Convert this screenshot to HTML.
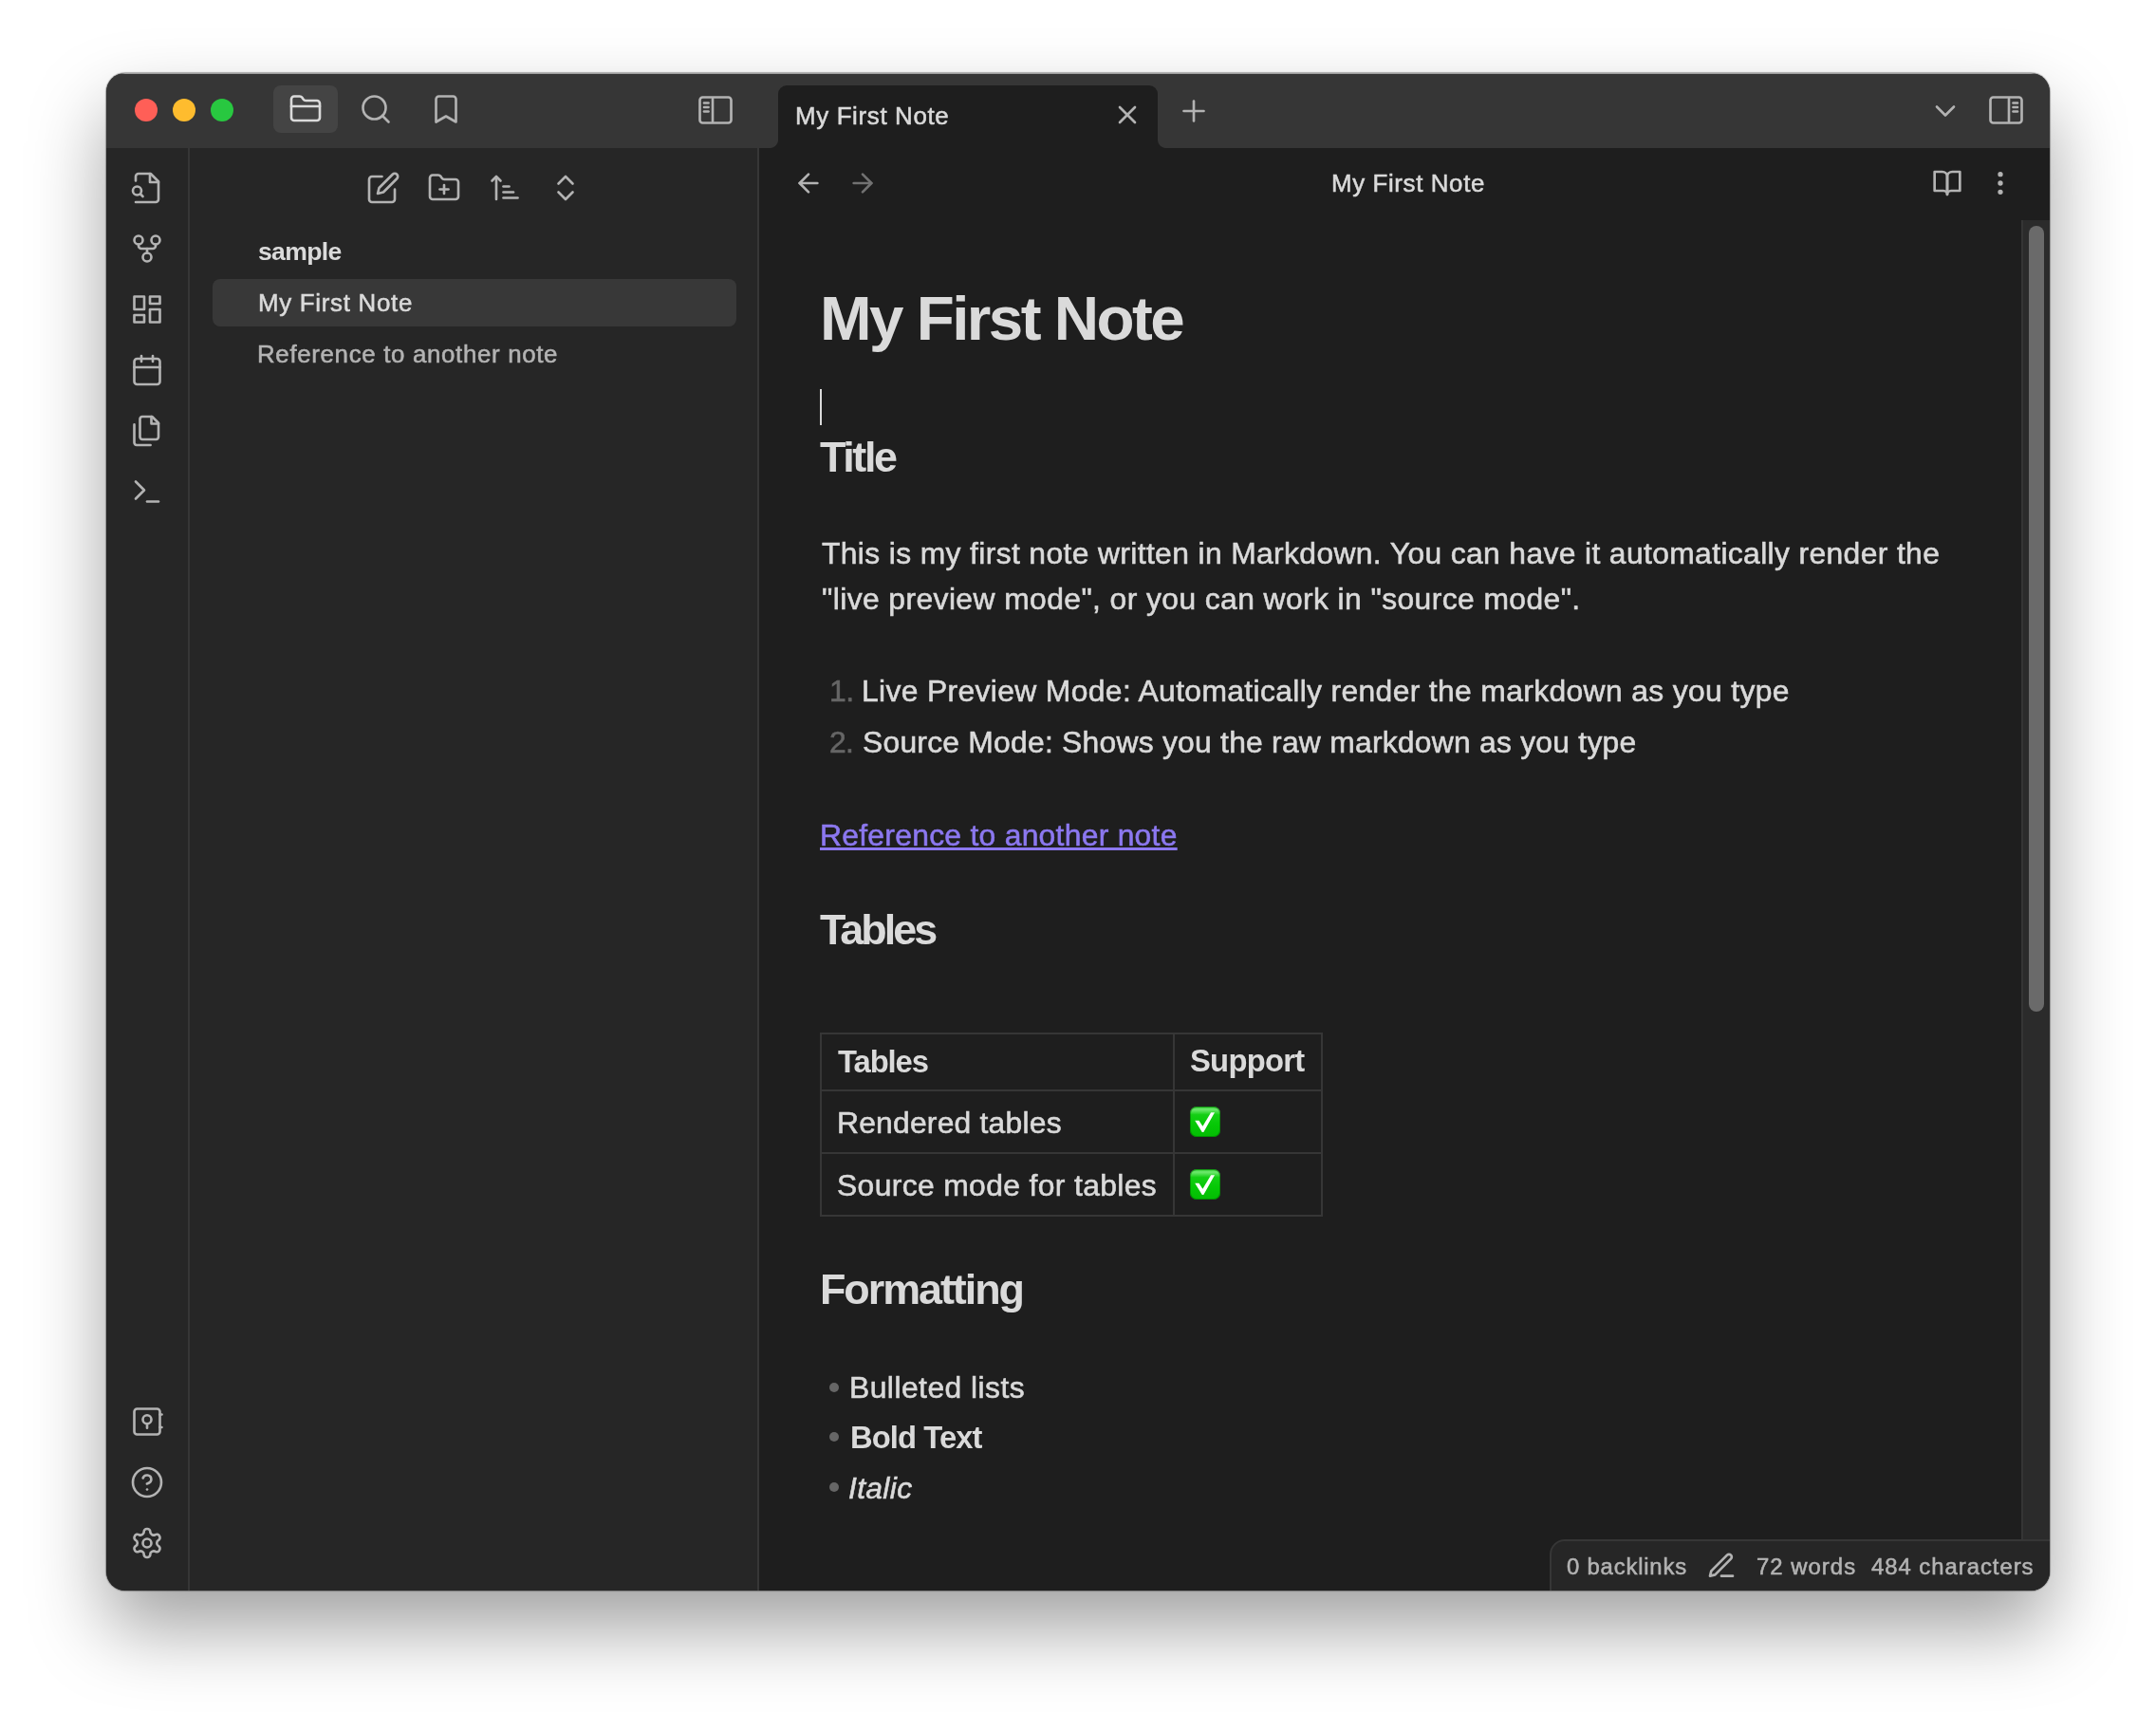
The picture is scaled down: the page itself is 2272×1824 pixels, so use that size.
<!DOCTYPE html>
<html lang="en">
<head>
<meta charset="utf-8">
<title>My First Note - sample - Obsidian</title>
<style>
*{box-sizing:border-box;margin:0;padding:0}
html,body{width:2272px;height:1824px;overflow:hidden;background:#fff}
body{position:relative;font-family:"Liberation Sans",Arial,Helvetica,sans-serif;-webkit-font-smoothing:antialiased}
.abs,.t,.ic,#app>div,#shadow{position:absolute}
#txt{position:absolute;left:0;top:0;width:2272px;height:1824px;will-change:transform}
nav,header,main,footer{display:contents}
.t{white-space:nowrap;font-weight:400;margin:0}
.ic{fill:none;stroke:currentColor;stroke-linecap:round;stroke-linejoin:round;overflow:visible}
#shadow{left:112px;top:77px;width:2048px;height:1599px;border-radius:20px;
  box-shadow:0 0 1px 1px rgba(0,0,0,.3),0 40px 80px 0 rgba(0,0,0,.37)}
#app{position:absolute;left:0;top:0;width:2272px;height:1824px;clip-path:inset(77px 112px 148px 112px round 20px);background:#1e1e1e}
#titlebar{left:112px;top:77px;width:2048px;height:79px;background:#363636;box-shadow:inset 0 1px 0 #a0a0a0}
#ribbon{left:112px;top:156px;width:88px;height:1520px;background:#262626;border-right:2px solid #363636}
#sidebar{left:200px;top:156px;width:600px;height:1520px;background:#262626;border-right:2px solid #363636}
#tabsel{left:288px;top:90px;width:68px;height:50px;border-radius:8px;background:#444444}
#tab{left:820px;top:90px;width:400px;height:66px;border-radius:9px 9px 0 0;background:#1e1e1e}
#tabl{left:811px;top:147px;width:9px;height:9px;background:radial-gradient(circle at 0 0,#363636 8.5px,#1e1e1e 9.5px)}
#tabr{left:1220px;top:147px;width:9px;height:9px;background:radial-gradient(circle at 100% 0,#363636 8.5px,#1e1e1e 9.5px)}
.tl{width:24px;height:24px;border-radius:50%;top:104px}
#navsel{left:224px;top:294px;width:552px;height:50px;border-radius:8px;background:#383838}
#track{left:2130px;top:232px;width:30px;height:1444px;background:#2b2b2b;border-left:2px solid #353535}
#thumb{left:2138px;top:238px;width:16px;height:828px;border-radius:8px;background:#6a6a6a}
#status{left:1633px;top:1622px;width:540px;height:70px;background:#262626;border:2px solid #363636;border-radius:16px 0 0 0}
#cursor{left:864px;top:410px;width:2px;height:38px;background:#dadada}
.lnk{text-decoration:underline;text-decoration-thickness:3px;text-underline-offset:2px}
#tbl{left:864px;top:1088px;width:530px;height:194px;border:2px solid #363636}
.hl{background:#363636;height:2px;left:866px;width:526px}
.bul{width:10px;height:10px;border-radius:50%;background:#666;left:874px}
.emo{width:32px;height:32px;left:1254px;border-radius:7px;background:linear-gradient(#22c522 0,#6fe96f 9%,#55e155 15%,#14cf14 27%,#06c806 60%,#03bd03 100%);box-shadow:inset 0 0 0 1px rgba(0,110,0,.55);overflow:hidden}
.emo span{position:absolute;left:0;top:0;width:32px;height:32px;opacity:0;font-size:24px;line-height:32px}
.emo i{position:absolute;left:0;top:0;width:32px;height:32px;background:#fff;clip-path:polygon(16.3% 46.3%,29.7% 46.3%,41.9% 65%,69% 19.7%,81.3% 19.7%,44.7% 84%,40% 84%)}
</style>
</head>
<body>
<div id="shadow"></div>
<div id="app">
  <div id="titlebar"></div>
  <div id="ribbon"></div>
  <div id="sidebar"></div>
  <div id="tabsel"></div>
  <div id="tab"></div><div id="tabl"></div><div id="tabr"></div>
  <div class="tl" style="left:142px;background:#ff5f57"></div>
  <div class="tl" style="left:182px;background:#febc2e"></div>
  <div class="tl" style="left:222px;background:#28c840"></div>
  <div id="navsel"></div>
  <div id="track"></div><div id="thumb"></div>
  <div id="cursor"></div>
  <div id="tbl"></div>
  <div class="hl" style="top:1148px"></div>
  <div class="hl" style="top:1214px"></div>
  <div class="abs" style="left:1236px;top:1090px;width:2px;height:190px;background:#363636"></div>
  <div class="emo" style="top:1166px"><span>✅</span><i></i></div>
  <div class="emo" style="top:1232px"><span>✅</span><i></i></div>
  <div class="bul" style="top:1457px"></div>
  <div class="bul" style="top:1509px"></div>
  <div class="bul" style="top:1562px"></div>
  <div id="status"></div>
<div id="txt">
<nav>
<div class="t" style="left:272px;top:249px;font-size:26.62px;line-height:33px;letter-spacing:-0.680px;font-weight:700;color:#dadada;">sample</div>
<div class="t" style="left:272px;top:303px;font-size:25.87px;line-height:32px;letter-spacing:0.717px;-webkit-text-stroke:0.55px;color:#dadada;">My First Note</div>
<div class="t" style="left:271px;top:357px;font-size:25.87px;line-height:32px;letter-spacing:0.667px;-webkit-text-stroke:0.55px;color:#b3b3b3;">Reference to another note</div>
</nav>
<header>
<div class="t" style="left:838px;top:106px;font-size:25.87px;line-height:32px;letter-spacing:0.667px;-webkit-text-stroke:0.55px;color:#dadada;">My First Note</div>
<div class="t" style="left:1403px;top:177px;font-size:25.87px;line-height:32px;letter-spacing:0.633px;-webkit-text-stroke:0.55px;color:#dadada;">My First Note</div>
</header>
<main>
<h1 class="t" style="left:864px;top:295px;font-size:65.54px;line-height:82px;letter-spacing:-2.533px;font-weight:700;color:#dadada;">My First Note</h1>
<h3 class="t" style="left:864px;top:454px;font-size:44.89px;line-height:56px;letter-spacing:-2.350px;font-weight:700;color:#dadada;">Title</h3>
<p class="t" style="left:866px;top:563px;font-size:31.84px;line-height:40px;letter-spacing:0.363px;-webkit-text-stroke:0.58px;color:#dadada;">This is my first note written in Markdown. You can have it automatically render the</p>
<p class="t" style="left:866px;top:611px;font-size:31.84px;line-height:40px;letter-spacing:0.408px;-webkit-text-stroke:0.58px;color:#dadada;">"live preview mode", or you can work in "source mode".</p>
<div class="t" style="left:874px;top:708px;font-size:31.84px;line-height:40px;letter-spacing:-0.400px;-webkit-text-stroke:0.58px;color:#666666;">1.</div>
<div class="t" style="left:908px;top:708px;font-size:31.84px;line-height:40px;letter-spacing:0.352px;-webkit-text-stroke:0.58px;color:#dadada;">Live Preview Mode: Automatically render the markdown as you type</div>
<div class="t" style="left:874px;top:762px;font-size:31.84px;line-height:40px;letter-spacing:-0.600px;-webkit-text-stroke:0.58px;color:#666666;">2.</div>
<div class="t" style="left:909px;top:762px;font-size:31.84px;line-height:40px;letter-spacing:0.240px;-webkit-text-stroke:0.58px;color:#dadada;">Source Mode: Shows you the raw markdown as you type</div>
<a class="t lnk" style="left:864px;top:860px;font-size:31.84px;line-height:40px;letter-spacing:0.275px;-webkit-text-stroke:0.58px;color:#8c78f0;">Reference to another note</a>
<h3 class="t" style="left:864px;top:952px;font-size:44.89px;line-height:56px;letter-spacing:-2.920px;font-weight:700;color:#dadada;">Tables</h3>
<div class="t" style="left:883px;top:1098px;font-size:32.77px;line-height:41px;letter-spacing:-1.080px;font-weight:700;color:#dadada;">Tables</div>
<div class="t" style="left:1254px;top:1097px;font-size:32.77px;line-height:41px;letter-spacing:-0.733px;font-weight:700;color:#dadada;">Support</div>
<div class="t" style="left:882px;top:1163px;font-size:31.84px;line-height:40px;letter-spacing:0.214px;-webkit-text-stroke:0.58px;color:#dadada;">Rendered tables</div>
<div class="t" style="left:882px;top:1229px;font-size:31.84px;line-height:40px;letter-spacing:0.362px;-webkit-text-stroke:0.58px;color:#dadada;">Source mode for tables</div>
<h3 class="t" style="left:864px;top:1331px;font-size:44.89px;line-height:56px;letter-spacing:-2.044px;font-weight:700;color:#dadada;">Formatting</h3>
<div class="t" style="left:895px;top:1442px;font-size:31.84px;line-height:40px;letter-spacing:0.462px;-webkit-text-stroke:0.58px;color:#dadada;">Bulleted lists</div>
<div class="t" style="left:896px;top:1494px;font-size:32.77px;line-height:41px;letter-spacing:-0.925px;font-weight:700;color:#dadada;">Bold Text</div>
<div class="t" style="left:894px;top:1548px;font-size:31.84px;line-height:40px;letter-spacing:0.320px;-webkit-text-stroke:0.58px;font-style:italic;color:#dadada;">Italic</div>
</main>
<footer>
<div class="t" style="left:1651px;top:1636px;font-size:23.88px;line-height:30px;letter-spacing:0.800px;-webkit-text-stroke:0.55px;color:#b3b3b3;">0 backlinks</div>
<div class="t" style="left:1851px;top:1636px;font-size:23.88px;line-height:30px;letter-spacing:1.029px;-webkit-text-stroke:0.55px;color:#b3b3b3;">72 words</div>
<div class="t" style="left:1972px;top:1636px;font-size:23.88px;line-height:30px;letter-spacing:0.969px;-webkit-text-stroke:0.55px;color:#b3b3b3;">484 characters</div>
</footer>
</div>
<svg class="ic" style="left:304px;top:97px;width:36px;height:36px;color:#dadada" viewBox="0 0 24 24" stroke-width="1.75"><path d="M4 20h16a2 2 0 0 0 2-2V8a2 2 0 0 0-2-2h-7.93a2 2 0 0 1-1.66-.9l-.82-1.2A2 2 0 0 0 7.93 3H4a2 2 0 0 0-2 2v13c0 1.1.9 2 2 2Z"/><path d="M2 10h20"/></svg>
<svg class="ic" style="left:378px;top:97px;width:36px;height:36px;color:#b3b3b3" viewBox="0 0 24 24" stroke-width="1.75"><circle cx="11" cy="11" r="8"/><path d="m21 21-4.35-4.35"/></svg>
<svg class="ic" style="left:452px;top:97px;width:36px;height:36px;color:#b3b3b3" viewBox="0 0 24 24" stroke-width="1.75"><path d="m19 21-7-4-7 4V5a2 2 0 0 1 2-2h10a2 2 0 0 1 2 2v16z"/></svg>
<svg class="ic" style="left:736px;top:98px;width:36px;height:36px;color:#b3b3b3" viewBox="0 0 24 24" stroke-width="1.75"><path d="M21 3H3C1.9 3 1 3.9 1 5v14c0 1.1.9 2 2 2h18c1.1 0 2-.9 2-2V5c0-1.1-.9-2-2-2Z"/><path d="M10 4v16"/><path d="M4 7h3"/><path d="M4 10h3"/><path d="M4 13h3"/></svg>
<svg class="ic" style="left:1172px;top:105px;width:32px;height:32px;color:#b3b3b3" viewBox="0 0 24 24" stroke-width="2"><path d="M18 6 6 18"/><path d="m6 6 12 12"/></svg>
<svg class="ic" style="left:1240px;top:99px;width:36px;height:36px;color:#b3b3b3" viewBox="0 0 24 24" stroke-width="1.75"><path d="M12 5v14"/><path d="M5 12h14"/></svg>
<svg class="ic" style="left:2032px;top:99px;width:36px;height:36px;color:#b3b3b3" viewBox="0 0 24 24" stroke-width="1.75"><path d="m6 9 6 6 6-6"/></svg>
<svg class="ic" style="left:2096px;top:98px;width:36px;height:36px;color:#b3b3b3" viewBox="0 0 24 24" stroke-width="1.75"><path d="M3 3h18c1.1 0 2 .9 2 2v14c0 1.1-.9 2-2 2H3c-1.1 0-2-.9-2-2V5c0-1.1.9-2 2-2Z"/><path d="M14 4v16"/><path d="M20 7h-3"/><path d="M20 10h-3"/><path d="M20 13h-3"/></svg>
<svg class="ic" style="left:836px;top:177px;width:32px;height:32px;color:#b3b3b3" viewBox="0 0 24 24" stroke-width="2"><path d="M19 12H5"/><path d="m12 19-7-7 7-7"/></svg>
<svg class="ic" style="left:892.5px;top:177px;width:32px;height:32px;color:#727272" viewBox="0 0 24 24" stroke-width="2"><path d="M5 12h14"/><path d="m12 5 7 7-7 7"/></svg>
<svg class="ic" style="left:2036px;top:177px;width:32px;height:32px;color:#b3b3b3" viewBox="0 0 24 24" stroke-width="2"><path d="M2 3h6a4 4 0 0 1 4 4v14a3 3 0 0 0-3-3H2z"/><path d="M22 3h-6a4 4 0 0 0-4 4v14a3 3 0 0 1 3-3h7z"/></svg>
<svg class="ic" style="left:2092px;top:177px;width:32px;height:32px;color:#b3b3b3" viewBox="0 0 24 24" stroke-width="2"><circle cx="12" cy="12" r="1"/><circle cx="12" cy="5" r="1"/><circle cx="12" cy="19" r="1"/></svg>
<svg class="ic" style="left:137px;top:180px;width:36px;height:36px;color:#b3b3b3" viewBox="0 0 24 24" stroke-width="1.75"><path d="M4 22h14a2 2 0 0 0 2-2V7.5L14.5 2H6a2 2 0 0 0-2 2v3"/><path d="M14 2v6h6"/><path d="M5 17a3 3 0 1 0 0-6 3 3 0 0 0 0 6z"/><path d="m9 18-1.5-1.5"/></svg>
<svg class="ic" style="left:137px;top:244px;width:36px;height:36px;color:#b3b3b3" viewBox="0 0 24 24" stroke-width="1.75"><circle cx="12" cy="18" r="3"/><circle cx="6" cy="6" r="3"/><circle cx="18" cy="6" r="3"/><path d="M18 9v1a2 2 0 0 1-2 2H8a2 2 0 0 1-2-2V9"/><path d="M12 12v3"/></svg>
<svg class="ic" style="left:137px;top:308px;width:36px;height:36px;color:#b3b3b3" viewBox="0 0 24 24" stroke-width="1.75"><rect x="3" y="3" width="7" height="9"/><rect x="14" y="3" width="7" height="5"/><rect x="14" y="12" width="7" height="9"/><rect x="3" y="16" width="7" height="5"/></svg>
<svg class="ic" style="left:137px;top:372px;width:36px;height:36px;color:#b3b3b3" viewBox="0 0 24 24" stroke-width="1.75"><rect x="3" y="4" width="18" height="18" rx="2" ry="2"/><path d="M16 2v4"/><path d="M8 2v4"/><path d="M3 10h18"/></svg>
<svg class="ic" style="left:137px;top:436px;width:36px;height:36px;color:#b3b3b3" viewBox="0 0 24 24" stroke-width="1.75"><path d="M15.5 2H8.6c-.4 0-.8.2-1.1.5-.3.3-.5.7-.5 1.1v12.8c0 .4.2.8.5 1.1.3.3.7.5 1.1.5h9.8c.4 0 .8-.2 1.1-.5.3-.3.5-.7.5-1.1V6.5L15.5 2z"/><path d="M3 7.6v12.8c0 .4.2.8.5 1.1.3.3.7.5 1.1.5h9.8"/><path d="M15 2v5h5"/></svg>
<svg class="ic" style="left:137px;top:500px;width:36px;height:36px;color:#b3b3b3" viewBox="0 0 24 24" stroke-width="1.75"><path d="m4 17 6-6-6-6"/><path d="M12 19h8"/></svg>
<svg class="ic" style="left:137px;top:1480px;width:36px;height:36px;color:#b3b3b3" viewBox="0 0 24 24" stroke-width="1.75"><rect x="3" y="3" width="18" height="18" rx="2"/><circle cx="12" cy="10.5" r="3"/><path d="M12 13.5v3"/><path d="M21 7h1.3"/><path d="M21 16h1.3"/></svg>
<svg class="ic" style="left:137px;top:1544px;width:36px;height:36px;color:#b3b3b3" viewBox="0 0 24 24" stroke-width="1.75"><circle cx="12" cy="12" r="10"/><path d="M9.09 9a3 3 0 0 1 5.83 1c0 2-3 3-3 3"/><path d="M12 17h.01"/></svg>
<svg class="ic" style="left:137px;top:1608px;width:36px;height:36px;color:#b3b3b3" viewBox="0 0 24 24" stroke-width="1.75"><path d="M12.22 2h-.44a2 2 0 0 0-2 2v.18a2 2 0 0 1-1 1.73l-.43.25a2 2 0 0 1-2 0l-.15-.08a2 2 0 0 0-2.73.73l-.22.38a2 2 0 0 0 .73 2.73l.15.1a2 2 0 0 1 1 1.72v.51a2 2 0 0 1-1 1.74l-.15.09a2 2 0 0 0-.73 2.73l.22.38a2 2 0 0 0 2.73.73l.15-.08a2 2 0 0 1 2 0l.43.25a2 2 0 0 1 1 1.73V20a2 2 0 0 0 2 2h.44a2 2 0 0 0 2-2v-.18a2 2 0 0 1 1-1.73l.43-.25a2 2 0 0 1 2 0l.15.08a2 2 0 0 0 2.73-.73l.22-.39a2 2 0 0 0-.73-2.73l-.15-.08a2 2 0 0 1-1-1.74v-.5a2 2 0 0 1 1-1.74l.15-.09a2 2 0 0 0 .73-2.73l-.22-.38a2 2 0 0 0-2.73-.73l-.15.08a2 2 0 0 1-2 0l-.43-.25a2 2 0 0 1-1-1.73V4a2 2 0 0 0-2-2z"/><circle cx="12" cy="12" r="3"/></svg>
<svg class="ic" style="left:386px;top:180px;width:36px;height:36px;color:#b3b3b3" viewBox="0 0 24 24" stroke-width="1.75"><path d="M11 4H4a2 2 0 0 0-2 2v14a2 2 0 0 0 2 2h14a2 2 0 0 0 2-2v-7"/><path d="M18.5 2.5a2.121 2.121 0 0 1 3 3L12 15l-4 1 1-4 9.5-9.5z"/></svg>
<svg class="ic" style="left:450px;top:180px;width:36px;height:36px;color:#b3b3b3" viewBox="0 0 24 24" stroke-width="1.75"><path d="M4 20h16a2 2 0 0 0 2-2V8a2 2 0 0 0-2-2h-7.93a2 2 0 0 1-1.66-.9l-.82-1.2A2 2 0 0 0 7.93 3H4a2 2 0 0 0-2 2v13c0 1.1.9 2 2 2Z"/><path d="M12 10v6"/><path d="M9 13h6"/></svg>
<svg class="ic" style="left:514px;top:180px;width:36px;height:36px;color:#b3b3b3" viewBox="0 0 24 24" stroke-width="1.75"><path d="M11 11h4"/><path d="M11 15h7"/><path d="M11 19h10"/><path d="M9 7 6 4 3 7"/><path d="M6 6v14"/></svg>
<svg class="ic" style="left:578px;top:180px;width:36px;height:36px;color:#b3b3b3" viewBox="0 0 24 24" stroke-width="1.75"><path d="m7 15 5 5 5-5"/><path d="m7 9 5-5 5 5"/></svg>
<svg class="ic" style="left:1798px;top:1634px;width:32px;height:32px;color:#b3b3b3" viewBox="0 0 24 24" stroke-width="2"><path d="M12 20h9"/><path d="M16.5 3.5a2.121 2.121 0 0 1 3 3L7 19l-4 1 1-4L16.5 3.5z"/></svg>
</div>
</body>
</html>
